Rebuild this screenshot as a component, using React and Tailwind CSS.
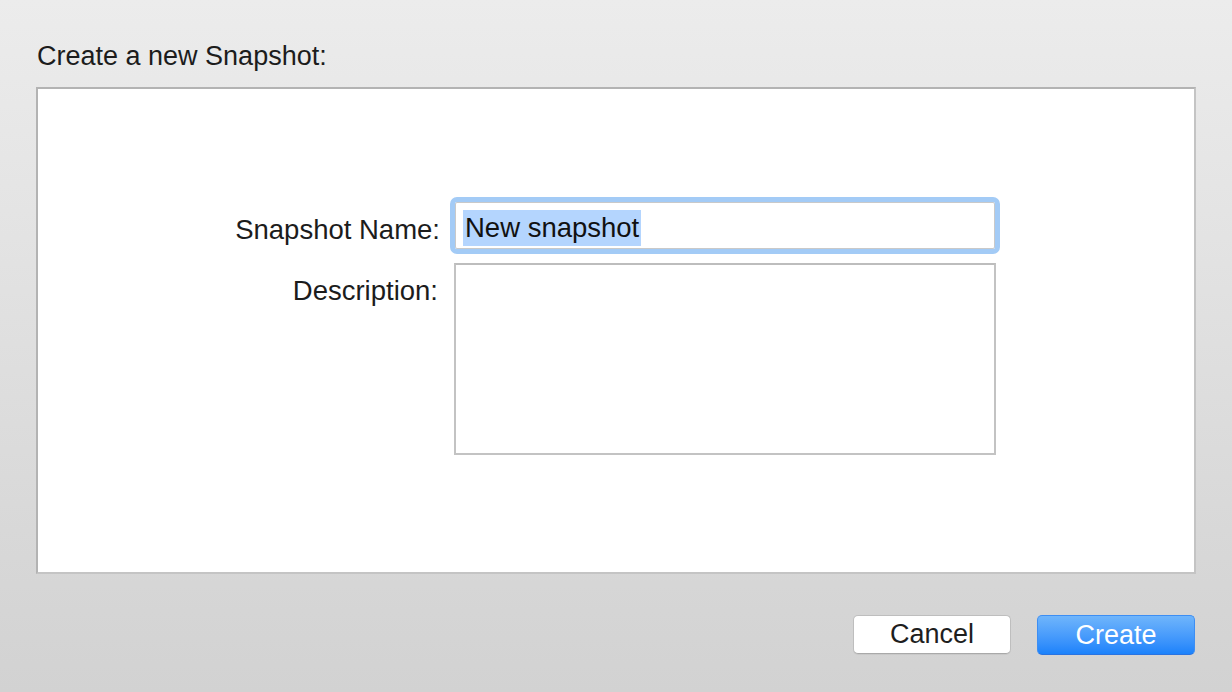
export default function App() {
  const font = { fontFamily: '"Liberation Sans", Arial, sans-serif' };
  return (
    <div
      className="w-[1232px] h-[692px] overflow-hidden bg-gradient-to-b from-[#ececec] to-[#d2d2d2] text-[#1c1c1c]"
      style={font}
    >
      <div className="pl-9 pr-9 pt-[41px]">
        <div className="text-[27px] leading-[31px] pl-px">Create a new Snapshot:</div>
        <div className="mt-[15px] h-[487px] bg-white border-2 border-[#b3b3b3] border-b-[#c4c4c4] border-r-[#c4c4c4] pt-[113px]">
          <div className="flex items-center">
            <div className="w-[402px] text-right text-[27.5px] leading-[31px] pt-[7px]">Snapshot Name:</div>
            <div className="ml-[15px] w-[540px] h-[47px] border border-[#c9c9c9] rounded-[2px] outline-[5px] outline-[#a3cbf6] outline-offset-0 flex items-center pl-[7px] pt-[4px]">
              <span className="bg-[#b4d5fe] text-[27.5px] leading-[36px] text-[#111] px-[2px]">New snapshot</span>
            </div>
          </div>
          <div className="flex mt-[14px]">
            <div className="w-[400px] text-right text-[27.5px] leading-[31px] pt-[12px]">Description:</div>
            <div className="ml-[16px] w-[542px] h-[192px] border-2 border-[#c3c3c3] border-t-[#bdbdbd]"></div>
          </div>
        </div>
        <div className="flex justify-end gap-[26px] mt-[41px] pr-px">
          <div className="w-[158px] h-[39px] bg-white border border-[#bebebe] border-b-[#a9a9a9] rounded-[5px] flex items-center justify-center text-[27px] text-[#1e1e1e] shadow-[0_1px_0_rgba(0,0,0,0.05)]">
            Cancel
          </div>
          <div className="w-[158px] h-[40px] bg-gradient-to-b from-[#6fb5fb] to-[#1a82fb] border border-[#3d8ef3] border-b-[#2a73e0] rounded-[5px] flex items-center justify-center text-[27px] text-white">
            Create
          </div>
        </div>
      </div>
    </div>
  );
}
